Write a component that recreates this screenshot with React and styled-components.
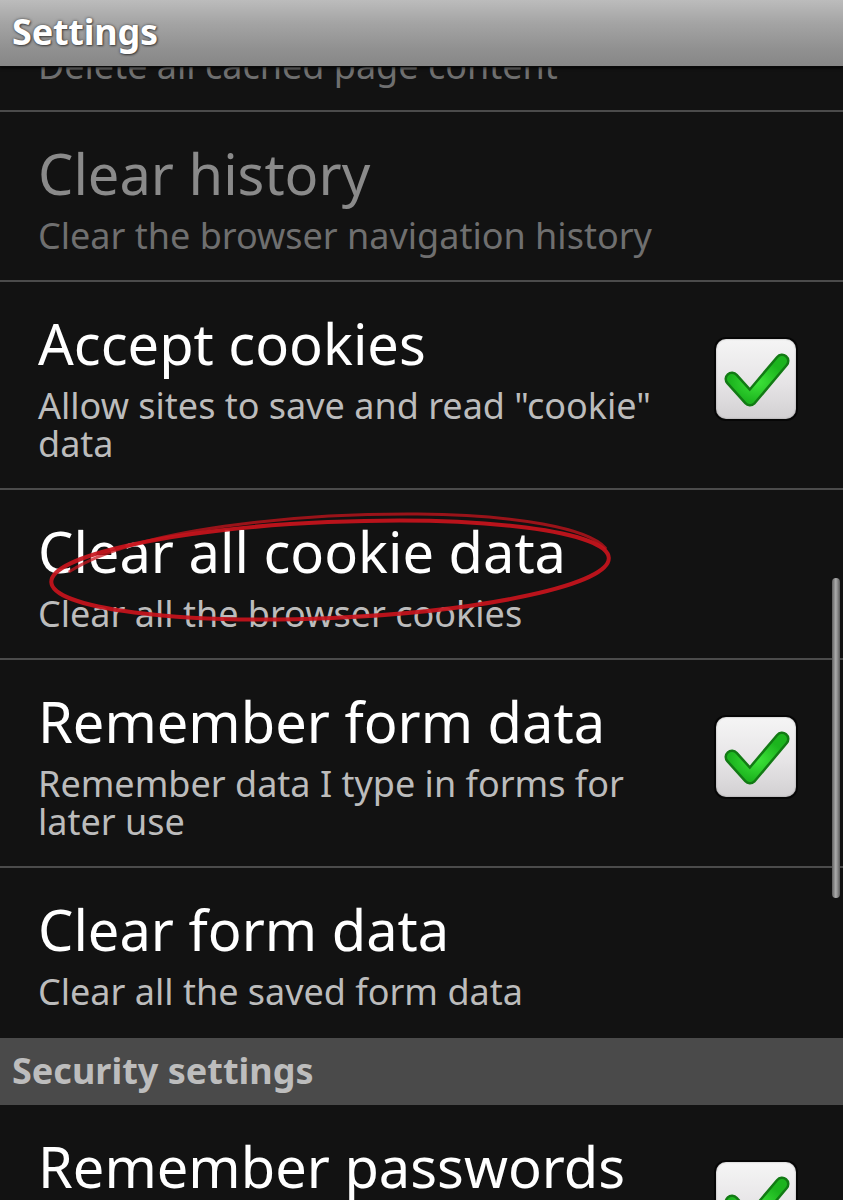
import React from "react";
import styled, { createGlobalStyle } from "styled-components";

const GlobalStyle = createGlobalStyle`
  html, body {
    margin: 0;
    padding: 0;
    background: #121212;
    overflow: hidden;
  }
  body {
    font-family: "Noto Sans", "Open Sans", "DejaVu Sans", sans-serif;
  }
`;

const Screen = styled.div`
  position: relative;
  width: 843px;
  height: 1200px;
  background: #121212;
  overflow: hidden;
  display: flex;
  flex-direction: column;
`;

const TitleBar = styled.header`
  position: relative;
  z-index: 2;
  flex: 0 0 66px;
  height: 66px;
  box-sizing: border-box;
  display: flex;
  align-items: center;
  padding: 0 0 3px 12px;
  background: linear-gradient(180deg, #bcbcbc 0%, #a4a4a4 35%, #909090 75%, #878787 100%);
  box-shadow: 0 1px 0 #0a0a0a, 0 2px 3px rgba(0, 0, 0, 0.8);
`;

const TitleText = styled.h1`
  margin: 0;
  font-size: 36px;
  font-weight: 700;
  color: #ffffff;
  letter-spacing: -0.2px;
  text-shadow: 0 0 3px rgba(40, 40, 40, 0.75), 1px 1px 2px rgba(0, 0, 0, 0.5);
`;

const Viewport = styled.main`
  position: relative;
  flex: 1 1 auto;
  overflow: hidden;
`;

const List = styled.div`
  display: flex;
  flex-direction: column;
  margin-top: ${(p) => p.$scroll}px;
`;

const PrefRow = styled.div`
  display: flex;
  align-items: flex-start;
  gap: 30px;
  padding: 31px 47px 25px 38px;
  border-bottom: 2px solid ${(p) => (p.$noDivider ? "#121212" : "#4b4b4b")};
`;

const PrefText = styled.div`
  flex: 1 1 auto;
  min-width: 0;
  display: flex;
  flex-direction: column;
`;

const PrefTitle = styled.div`
  font-size: 56px;
  line-height: 60px;
  color: ${(p) => (p.$disabled ? "#8a8a8a" : "#ffffff")};
  white-space: nowrap;
`;

const PrefSummary = styled.div`
  margin-top: 14px;
  font-size: 36px;
  line-height: 38px;
  color: ${(p) => (p.$disabled ? "#6f6f6f" : "#bcbcbc")};
`;

const CheckBox = styled.div`
  flex: 0 0 80px;
  width: 80px;
  height: 80px;
  margin-top: 26px;
  box-sizing: border-box;
  border-radius: 10px;
  background: linear-gradient(180deg, #f5f5f5 0%, #e6e4e6 55%, #d2d0d2 100%);
  box-shadow: 0 0 0 2px #060606, inset 0 0 2px rgba(0, 0, 0, 0.35);
  display: flex;
  align-items: center;
  justify-content: center;

  svg {
    display: block;
  }
`;

const SectionHeader = styled.div`
  height: 67px;
  box-sizing: border-box;
  display: flex;
  align-items: center;
  padding: 0 0 2px 12px;
  background: #4a4a4a;
  font-size: 36px;
  font-weight: 700;
  color: #bdbdbd;
  letter-spacing: 0px;
`;

const ScrollThumb = styled.div`
  position: absolute;
  right: 3px;
  top: 512px;
  width: 8px;
  height: 320px;
  border-radius: 4px;
  background: linear-gradient(90deg, #5e5e5e 0%, #a9a9a9 45%, #9a9a9a 60%, #5a5a5a 100%);
`;

const Annotation = styled.svg`
  position: absolute;
  left: 0;
  top: 0;
  width: 843px;
  height: 1200px;
  pointer-events: none;
  z-index: 3;
`;

function Check() {
  return (
    <svg width="80" height="80" viewBox="0 0 80 80">
      <defs>
        <radialGradient id="chk" cx="50%" cy="55%" r="55%">
          <stop offset="0%" stopColor="#3ee43a" />
          <stop offset="100%" stopColor="#1cb41e" />
        </radialGradient>
      </defs>
      <path
        d="M16 40 L34 60 L66 22"
        fill="none"
        stroke="#127a14"
        strokeWidth="15"
        strokeLinecap="round"
        strokeLinejoin="round"
      />
      <path
        d="M16 40 L34 60 L66 22"
        fill="none"
        stroke="url(#chk)"
        strokeWidth="10"
        strokeLinecap="round"
        strokeLinejoin="round"
      />
    </svg>
  );
}

function Pref({ title, summary, disabled, checked, noDivider }) {
  return (
    <PrefRow $noDivider={noDivider}>
      <PrefText>
        <PrefTitle $disabled={disabled}>{title}</PrefTitle>
        <PrefSummary $disabled={disabled}>{summary}</PrefSummary>
      </PrefText>
      {checked !== undefined && (
        <CheckBox>{checked && <Check />}</CheckBox>
      )}
    </PrefRow>
  );
}

export default function App() {
  return (
    <>
      <GlobalStyle />
      <Screen>
        <TitleBar>
          <TitleText>Settings</TitleText>
        </TitleBar>
        <Viewport>
          <List $scroll={-124}>
            <Pref title="Clear cache" summary="Delete all cached page content" disabled />
            <Pref title="Clear history" summary="Clear the browser navigation history" disabled />
            <Pref
              title="Accept cookies"
              summary={'Allow sites to save and read "cookie" data'}
              checked
            />
            <Pref title="Clear all cookie data" summary="Clear all the browser cookies" />
            <Pref
              title="Remember form data"
              summary="Remember data I type in forms for later use"
              checked
            />
            <Pref title="Clear form data" summary="Clear all the saved form data" noDivider />
            <SectionHeader>Security settings</SectionHeader>
            <Pref
              title="Remember passwords"
              summary="Save usernames and passwords for websites"
              checked
            />
          </List>
          <ScrollThumb />
        </Viewport>
        <Annotation viewBox="0 0 843 1200">
          <g transform="rotate(-2.5 330 569)" fill="none" stroke="#c8141c" strokeLinecap="round">
            <ellipse cx="330" cy="570" rx="279" ry="48" strokeWidth="4" opacity="0.92" />
            <path
              d="M70 560 C 140 520, 300 512, 420 518 C 520 523, 590 540, 606 560"
              strokeWidth="3"
              opacity="0.75"
            />
          </g>
        </Annotation>
      </Screen>
    </>
  );
}
